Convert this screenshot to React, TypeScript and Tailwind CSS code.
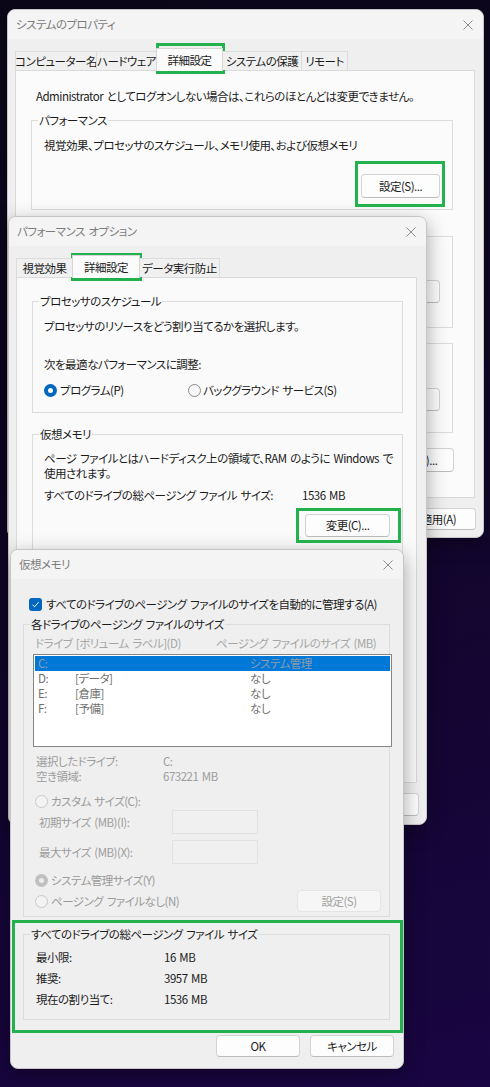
import type { ReactNode } from "react";

type Tab = { label: string; w: string };

function CloseIcon() {
  return (
    <svg width="10" height="10" viewBox="0 0 10 10" className="shrink-0">
      <path d="M0.5 0.5L9.5 9.5M9.5 0.5L0.5 9.5" stroke="#8c8c8c" strokeWidth="1" />
    </svg>
  );
}

function Window({ title, className, children }: { title: string; className: string; children: ReactNode }) {
  return (
    <div
      className={`absolute flex flex-col overflow-hidden rounded-[8px] border border-[#c6c6c6] bg-[#efefef] shadow-[0_6px_20px_rgba(0,0,0,0.35)] ${className}`}
    >
      <div className="flex h-[29px] shrink-0 items-center justify-between bg-[#f4f4f4] pl-[8px] pr-[10px] text-[#7b7b7b]">
        <span>{title}</span>
        <CloseIcon />
      </div>
      {children}
    </div>
  );
}

function Tabs({ tabs, active }: { tabs: Tab[]; active: number }) {
  return (
    <div className="relative z-10 ml-[7px] mt-[9px] flex items-end">
      {tabs.map((t, i) => (
        <div
          key={t.label}
          className={`flex items-center justify-center border border-b-0 ${t.w} ${i > 0 ? "-ml-px" : ""} ${
            i === active
              ? "relative z-10 mb-[-1px] h-[23px] border-[#d6d6d6] bg-[#fbfbfb]"
              : "h-[19px] border-[#dcdcdc] bg-[#f0f0f0]"
          }`}
        >
          {t.label}
        </div>
      ))}
    </div>
  );
}

function Group({ legend, className, children }: { legend: string; className: string; children: ReactNode }) {
  return (
    <fieldset className={`min-w-0 border border-[#dcdcdc] ${className}`}>
      <legend className="ml-[6px] px-px leading-[15px]">{legend}</legend>
      {children}
    </fieldset>
  );
}

function Btn({ children, className, disabled }: { children: ReactNode; className: string; disabled?: boolean }) {
  return (
    <button
      type="button"
      className={`flex items-center justify-center rounded-[4px] border ${
        disabled
          ? "border-[#e4e4e4] bg-[#f6f6f6] text-[#a3a3a3]"
          : "border-[#d3d3d3] border-b-[#bcbcbc] bg-[#fdfdfd] text-[#1b1b1b]"
      } ${className}`}
    >
      {children}
    </button>
  );
}

function Radio({ checked, disabled }: { checked?: boolean; disabled?: boolean }) {
  if (checked && !disabled)
    return (
      <span className="flex size-[13px] shrink-0 items-center justify-center rounded-full bg-[#0067c0]">
        <span className="size-[5px] rounded-full bg-white" />
      </span>
    );
  if (checked)
    return (
      <span className="flex size-[13px] shrink-0 items-center justify-center rounded-full bg-[#c0c0c0]">
        <span className="size-[5px] rounded-full bg-[#ececec]" />
      </span>
    );
  return (
    <span
      className={`size-[13px] shrink-0 rounded-full border ${
        disabled ? "border-[#c9c9c9] bg-[#f3f3f3]" : "border-[#8a8a8a] bg-[#f8f8f8]"
      }`}
    />
  );
}

function Checkbox() {
  return (
    <span className="flex size-[13px] shrink-0 items-center justify-center rounded-[3px] bg-[#0067c0]">
      <svg width="9" height="9" viewBox="0 0 9 9">
        <path d="M1.5 4.8L3.6 6.8L7.6 2.2" fill="none" stroke="white" strokeWidth="1" />
      </svg>
    </span>
  );
}

const drives = [
  { d: "C:", label: "", size: "システム管理", sel: true },
  { d: "D:", label: "[データ]", size: "なし", sel: false },
  { d: "E:", label: "[倉庫]", size: "なし", sel: false },
  { d: "F:", label: "[予備]", size: "なし", sel: false },
];

function SystemProperties() {
  return (
    <Window title="システムのプロパティ" className="left-[7px] top-[9px] h-[529px] w-[477px]">
      <Tabs
        active={2}
        tabs={[
          { label: "コンピューター名", w: "w-[82px]" },
          { label: "ハードウェア", w: "w-[61px]" },
          { label: "詳細設定", w: "w-[67px]" },
          { label: "システムの保護", w: "w-[80px]" },
          { label: "リモート", w: "w-[47px]" },
        ]}
      />
      <div className="ml-[7px] h-[428px] w-[460px] border border-[#dadada] bg-[#fbfbfb]">
        <p className="pl-[20px] pt-[18px]">Administrator としてログオンしない場合は、これらのほとんどは変更できません。</p>
        <Group legend="パフォーマンス" className="ml-[15px] mt-[9px] h-[97px] w-[422px]">
          <div className="px-[12px] pt-[10px]">
            <p>視覚効果、プロセッサのスケジュール、メモリ使用、および仮想メモリ</p>
            <div className="mt-[21px] flex justify-end">
              <Btn className="h-[24px] w-[79px]">設定(S)...</Btn>
            </div>
          </div>
        </Group>
        <Group legend="ユーザー プロファイル" className="ml-[15px] mt-[19px] h-[99px] w-[422px]">
          <div className="px-[12px] pt-[10px]">
            <p>サインインに関連したデスクトップ設定</p>
            <div className="mt-[11px] flex justify-end">
              <Btn className="h-[23px] w-[79px]">設定(E)...</Btn>
            </div>
          </div>
        </Group>
        <Group legend="起動と回復" className="ml-[15px] mt-[8px] h-[97px] w-[422px]">
          <div className="px-[12px] pt-[10px]">
            <p>システム起動、システム障害、およびデバッグ情報</p>
            <div className="mt-[12px] flex justify-end">
              <Btn className="h-[23px] w-[79px]">設定(T)...</Btn>
            </div>
          </div>
        </Group>
        <div className="mt-[15px] flex justify-end pr-[20px]">
          <Btn className="h-[24px] w-[100px]">環境変数(N)...</Btn>
        </div>
      </div>
      <div className="mt-[10px] flex justify-end gap-[8px] pr-[7px]">
        <Btn className="h-[22px] w-[75px]">OK</Btn>
        <Btn className="h-[22px] w-[75px]">キャンセル</Btn>
        <Btn className="h-[22px] w-[75px]">適用(A)</Btn>
      </div>
    </Window>
  );
}

function PerformanceOptions() {
  return (
    <Window title="パフォーマンス オプション" className="left-[8px] top-[216px] h-[609px] w-[419px]">
      <Tabs
        active={1}
        tabs={[
          { label: "視覚効果", w: "w-[57px]" },
          { label: "詳細設定", w: "w-[68px]" },
          { label: "データ実行防止", w: "w-[81px]" },
        ]}
      />
      <div className="ml-[7px] h-[506px] w-[401px] border border-[#dadada] bg-[#fafafa]">
        <Group legend="プロセッサのスケジュール" className="ml-[15px] mt-[16px] h-[119px] w-[371px]">
          <div className="pl-[11px] pt-[10px]">
            <p>プロセッサのリソースをどう割り当てるかを選択します。</p>
            <p className="mt-[23px]">次を最適なパフォーマンスに調整:</p>
            <div className="mt-[11px] flex h-[15px] items-center">
              <div className="flex w-[144px] items-center gap-[3px]">
                <Radio checked />
                <span>プログラム(P)</span>
              </div>
              <div className="flex items-center gap-[2px]">
                <Radio />
                <span>バックグラウンド サービス(S)</span>
              </div>
            </div>
          </div>
        </Group>
        <Group legend="仮想メモリ" className="ml-[15px] mt-[14px] h-[130px] w-[371px]">
          <div className="pl-[11px] pr-[12px] pt-[9px]">
            <p>
              ページ ファイルとはハードディスク上の領域で、RAM のように Windows で
              <br />
              使用されます。
            </p>
            <div className="mt-[7px] flex">
              <span className="w-[258px]">すべてのドライブの総ページング ファイル サイズ:</span>
              <span>1536 MB</span>
            </div>
            <div className="mt-[11px] flex justify-end">
              <Btn className="h-[23px] w-[85px]">変更(C)...</Btn>
            </div>
          </div>
        </Group>
      </div>
      <div className="mt-[10px] flex justify-end gap-[8px] pr-[7px]">
        <Btn className="h-[23px] w-[75px]">OK</Btn>
        <Btn className="h-[23px] w-[75px]">キャンセル</Btn>
        <Btn className="h-[23px] w-[75px]">適用(A)</Btn>
      </div>
    </Window>
  );
}

function VirtualMemory() {
  return (
    <Window title="仮想メモリ" className="left-[10px] top-[549px] h-[520px] w-[394px]">
      <div className="flex items-center gap-[4px] pl-[18px] pt-[18px]">
        <Checkbox />
        <span>すべてのドライブのページング ファイルのサイズを自動的に管理する(A)</span>
      </div>
      <Group legend="各ドライブのページング ファイルのサイズ" className="ml-[12px] mt-[5px] h-[300px] w-[367px]">
        <div className="flex pl-[11px] pt-[4px] text-[#a6a6a6]">
          <span className="w-[181px]">ドライブ [ボリューム ラベル](D)</span>
          <span>ページング ファイルのサイズ (MB)</span>
        </div>
        <div className="ml-[9px] mt-[3px] h-[93px] w-[359px] border border-[#858585] bg-white p-px">
          {drives.map((r) => (
            <div
              key={r.d}
              className={`flex h-[15px] items-center ${r.sel ? "bg-[#0078d7] text-[#8f9cab]" : "text-[#6f6f6f]"}`}
            >
              <span className="w-[40px] pl-[3px]">{r.d}</span>
              <span className="w-[175px]">{r.label}</span>
              <span>{r.size}</span>
            </div>
          ))}
        </div>
        <div className="mt-[7px] pl-[12px] text-[#9d9d9d]">
          <div className="flex">
            <span className="w-[127px]">選択したドライブ:</span>
            <span>C:</span>
          </div>
          <div className="flex">
            <span className="w-[127px]">空き領域:</span>
            <span>673221 MB</span>
          </div>
        </div>
        <div className="mt-[10px] flex items-center gap-[3px] pl-[11px] text-[#9a9a9a]">
          <Radio disabled />
          <span>カスタム サイズ(C):</span>
        </div>
        <div className="mt-px flex h-[24px] items-center pl-[15px] text-[#9d9d9d]">
          <span className="w-[133px]">初期サイズ (MB)(I):</span>
          <span className="h-[24px] w-[86px] border border-[#e2e2e2] bg-[#f0f0f0]" />
        </div>
        <div className="mt-[6px] flex h-[24px] items-center pl-[15px] text-[#9d9d9d]">
          <span className="w-[133px]">最大サイズ (MB)(X):</span>
          <span className="h-[24px] w-[86px] border border-[#e2e2e2] bg-[#f0f0f0]" />
        </div>
        <div className="mt-[9px] flex items-center gap-[3px] pl-[11px] text-[#9a9a9a]">
          <Radio checked disabled />
          <span>システム管理サイズ(Y)</span>
        </div>
        <div className="mt-[2px] flex h-[22px] items-center justify-between pl-[11px] pr-[8px] text-[#9a9a9a]">
          <div className="flex items-center gap-[3px]">
            <Radio disabled />
            <span>ページング ファイルなし(N)</span>
          </div>
          <Btn disabled className="h-[22px] w-[84px]">
            設定(S)
          </Btn>
        </div>
      </Group>
      <Group legend="すべてのドライブの総ページング ファイル サイズ" className="ml-[12px] mt-[10px] h-[93px] w-[367px]">
        <div className="pl-[12px] pt-[5px] leading-[21px]">
          <div className="flex">
            <span className="w-[128px]">最小限:</span>
            <span>16 MB</span>
          </div>
          <div className="flex">
            <span className="w-[128px]">推奨:</span>
            <span>3957 MB</span>
          </div>
          <div className="flex">
            <span className="w-[128px]">現在の割り当て:</span>
            <span>1536 MB</span>
          </div>
        </div>
      </Group>
      <div className="mt-[15px] flex justify-end gap-[10px] pr-[9px]">
        <Btn className="h-[22px] w-[84px]">OK</Btn>
        <Btn className="h-[22px] w-[84px]">キャンセル</Btn>
      </div>
    </Window>
  );
}

export default function App() {
  return (
    <div className="relative h-[1087px] w-[490px] overflow-hidden whitespace-nowrap bg-[linear-gradient(165deg,#0b0718_0%,#110628_45%,#190543_100%)] font-['Noto_Sans_CJK_JP',sans-serif] text-[11.5px] leading-[15px] tracking-[-0.5px] text-[#1b1b1b] [font-feature-settings:'palt'] [word-spacing:1.5px]">
      <SystemProperties />
      <PerformanceOptions />
      <VirtualMemory />
      {/* green highlight frames */}
      <div className="pointer-events-none absolute left-[156px] top-[43px] h-[31px] w-[69px] border-[3px] border-[#22b14c]" />
      <div className="pointer-events-none absolute left-[355px] top-[161px] h-[46px] w-[90px] border-[3px] border-[#22b14c]" />
      <div className="pointer-events-none absolute left-[71px] top-[253px] h-[28px] w-[71px] border-[3px] border-[#22b14c]" />
      <div className="pointer-events-none absolute left-[296px] top-[508px] h-[35px] w-[105px] border-[3px] border-[#22b14c]" />
      <div className="pointer-events-none absolute left-[12px] top-[920px] h-[113px] w-[391px] border-[3px] border-[#22b14c]" />
    </div>
  );
}
